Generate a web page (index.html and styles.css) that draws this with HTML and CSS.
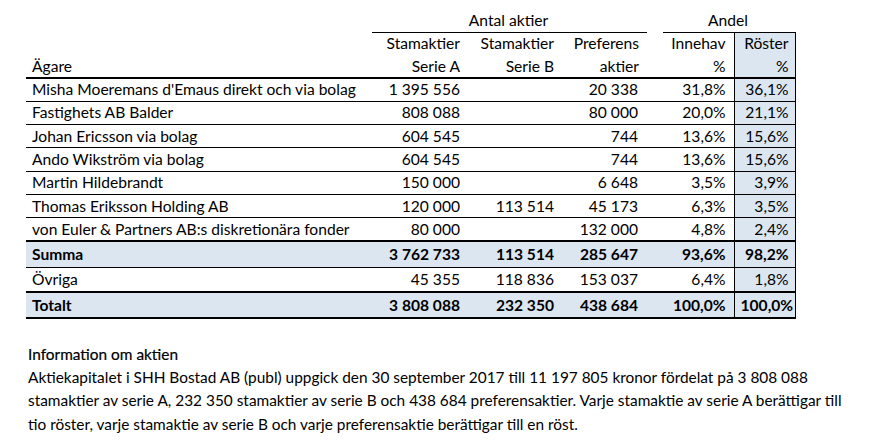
FILE: index.html
```html
<!DOCTYPE html>
<html lang="sv">
<head>
<meta charset="utf-8">
<title>Ägare</title>
<link rel="stylesheet" href="styles.css">
</head>
<body>
<div class="page">
  <table class="owners">
    <colgroup>
      <col class="c-name"><col class="c-a"><col class="c-b"><col class="c-p"><col class="c-gap"><col class="c-inn"><col class="c-ros">
    </colgroup>
    <thead>
      <tr class="h1">
        <th></th><th colspan="3" class="grp">Antal aktier</th><th></th><th colspan="2" class="grp">Andel</th>
      </tr>
      <tr class="h2">
        <th></th><th>Stamaktier</th><th>Stamaktier</th><th>Preferens</th><th></th><th>Innehav</th><th class="ros">Röster</th>
      </tr>
      <tr class="h3">
        <th class="name">Ägare</th><th>Serie A</th><th>Serie B</th><th>aktier</th><th></th><th>%</th><th class="ros">%</th>
      </tr>
    </thead>
    <tbody>
      <tr><td class="name">Misha Moeremans d'Emaus direkt och via bolag</td><td class="a">1 395 556</td><td></td><td class="p">20 338</td><td></td><td>31,8%</td><td class="ros">36,1%</td></tr>
      <tr><td class="name">Fastighets AB Balder</td><td class="a">808 088</td><td></td><td class="p">80 000</td><td></td><td>20,0%</td><td class="ros">21,1%</td></tr>
      <tr><td class="name">Johan Ericsson via bolag</td><td class="a">604 545</td><td></td><td class="p">744</td><td></td><td>13,6%</td><td class="ros">15,6%</td></tr>
      <tr><td class="name">Ando Wikström via bolag</td><td class="a">604 545</td><td></td><td class="p">744</td><td></td><td>13,6%</td><td class="ros">15,6%</td></tr>
      <tr><td class="name">Martin Hildebrandt</td><td class="a">150 000</td><td></td><td class="p">6 648</td><td></td><td>3,5%</td><td class="ros">3,9%</td></tr>
      <tr><td class="name">Thomas Eriksson Holding AB</td><td class="a">120 000</td><td class="b">113 514</td><td class="p">45 173</td><td></td><td>6,3%</td><td class="ros">3,5%</td></tr>
      <tr class="last"><td class="name">von Euler &amp; Partners AB:s diskretionära fonder</td><td class="a">80 000</td><td></td><td class="p">132 000</td><td></td><td>4,8%</td><td class="ros">2,4%</td></tr>
      <tr class="sum"><td class="name">Summa</td><td class="a">3 762 733</td><td class="b">113 514</td><td class="p">285 647</td><td></td><td>93,6%</td><td class="ros">98,2%</td></tr>
      <tr class="last other"><td class="name">Övriga</td><td class="a">45 355</td><td class="b">118 836</td><td class="p">153 037</td><td></td><td>6,4%</td><td class="ros">1,8%</td></tr>
      <tr class="sum total"><td class="name">Totalt</td><td class="a">3 808 088</td><td class="b">232 350</td><td class="p">438 684</td><td></td><td>100,0%</td><td class="ros">100,0%</td></tr>
    </tbody>
  </table>

  <section class="info">
    <h2 class="info-title">Information om aktien</h2>
    <p class="info-text">Aktiekapitalet i SHH Bostad AB (publ) uppgick den 30 september 2017 till 11 197 805 kronor fördelat på 3 808 088<br>stamaktier av serie A, 232 350 stamaktier av serie B och 438 684 preferensaktier. Varje stamaktie av serie A berättigar till<br>tio röster, varje stamaktie av serie B och varje preferensaktie berättigar till en röst.</p>
  </section>
</div>
</body>
</html>
```

FILE: styles.css
```css
html, body {
  margin: 0;
  padding: 0;
  background: #ffffff;
}

body {
  font-family: Lato, "Open Sans", "Liberation Sans", sans-serif;
  color: #000000;
  font-size: 15.6px;
}

.page {
  padding: 9px 0 0 26px;
}

.owners {
  border-collapse: collapse;
  table-layout: fixed;
  width: 769px;
}

.c-name { width: 346px; }
.c-a { width: 96px; }
.c-b { width: 94px; }
.c-p { width: 85px; }
.c-gap { width: 16px; }
.c-inn { width: 71px; }
.c-ros { width: 61px; }

.owners th,
.owners td {
  font-weight: normal;
  text-align: right;
  white-space: nowrap;
  padding: 0 8px 0 6px;
  line-height: 19px;
  vertical-align: middle;
}

.owners thead tr { height: 23px; }

.owners .h1 th { padding-top: 1px; }

.owners th.grp {
  text-align: center;
  border-bottom: 1px solid #000;
}

.owners .h3 th {
  border-bottom: 2px solid #000;
}

.owners .name {
  text-align: left;
  padding-left: 6px;
}

.owners tbody tr { height: 23.3px; }

.owners tbody td {
  border-bottom: 1px solid #000;
}

.owners tbody tr.last td {
  border-bottom: 2px solid #000;
}

.owners td.p { padding-right: 9px; }

.owners .ros {
  background: #dce6f1;
  border-left: 1px solid #000;
  border-right: 1px solid #000;
  padding-right: 6px;
}

.owners tr.sum { height: 26px; }
.owners tr.other { height: 25px; }

.owners tr.sum td {
  background: #dce6f1;
  font-weight: bold;
}

.owners tr.total td {
  border-bottom: 2px solid #000;
}

.info {
  padding: 25px 0 0 2px;
}

.info-title {
  margin: 0;
  font-size: 15.4px;
  font-weight: normal;
  line-height: 21.5px;
  -webkit-text-stroke: 0.2px #000;
}

.info-text {
  margin: 0;
  font-size: 15.4px;
  line-height: 23.5px;
}
```
